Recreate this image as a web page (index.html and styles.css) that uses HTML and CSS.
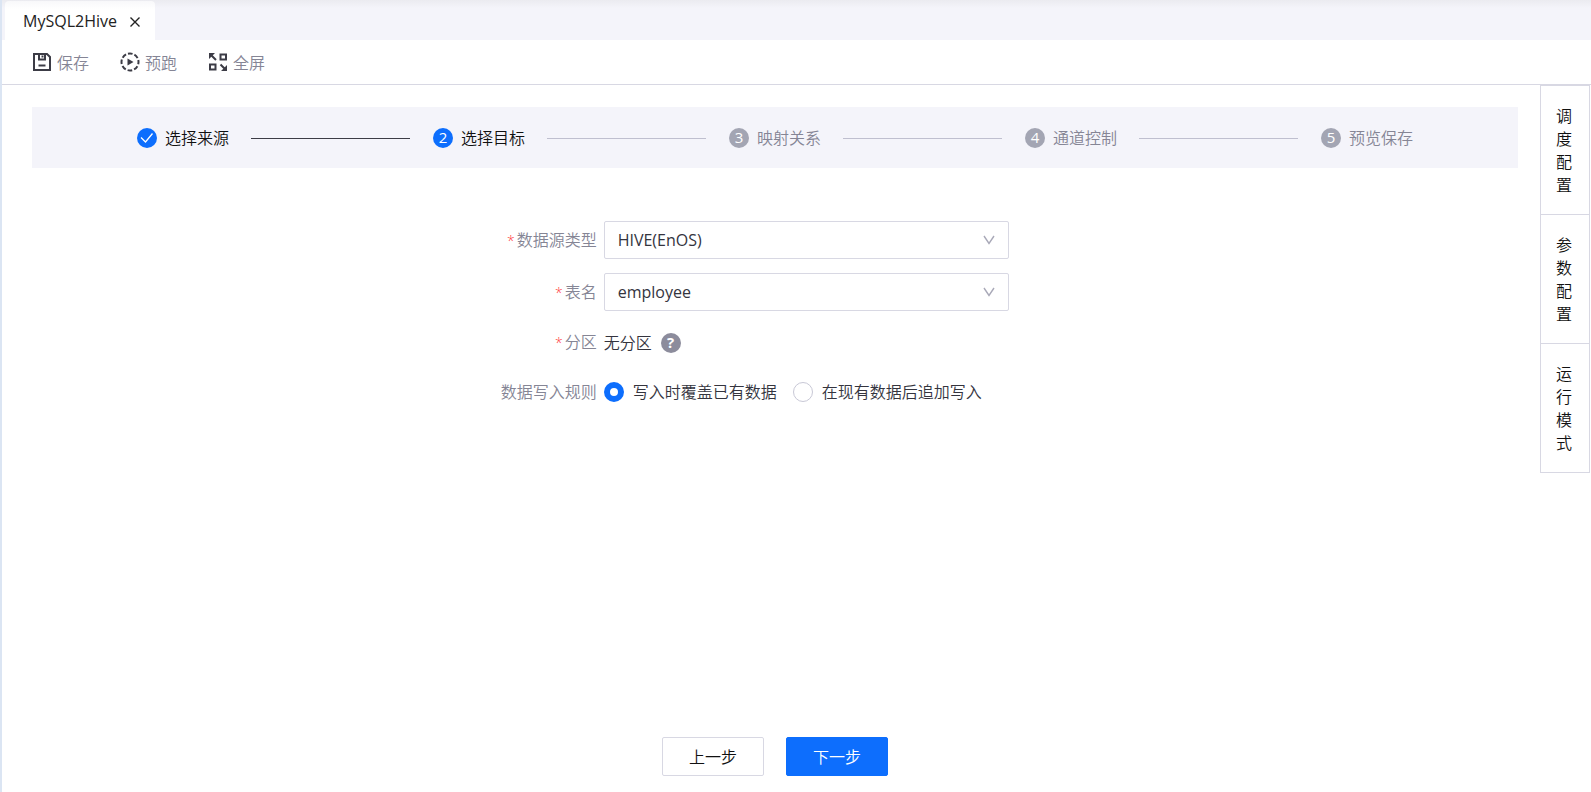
FILE: index.html
```html
<!DOCTYPE html>
<html lang="zh-CN">
<head>
<meta charset="utf-8">
<title>MySQL2Hive</title>
<link rel="stylesheet" href="styles.css">
</head>
<body>
<div class="app">
  <header class="tabbar">
    <div class="tab">
      <span>MySQL2Hive</span>
      <button class="tab-close" type="button" aria-label="关闭">
        <svg width="12" height="12" viewBox="0 0 12 12" fill="none" stroke="#222" stroke-width="1.4"><path d="M1.5 1.5l9 9M10.5 1.5l-9 9"/></svg>
      </button>
    </div>
  </header>

  <div class="toolbar">
    <button class="tool" type="button">
      <svg width="20" height="20" viewBox="0 0 20 20" fill="none" stroke="#3c3c46" stroke-width="2"><path d="M2 2h13l3 3v13H2z"/><path d="M7 2v5.500h6V2M10.500 3.500v2"/><path d="M6.500 13.500h7" /></svg>
      <span>保存</span>
    </button>
    <button class="tool" type="button">
      <svg width="20" height="20" viewBox="0 0 20 20" fill="none" stroke="#3c3c46" stroke-width="2"><circle cx="10" cy="10" r="8.500" stroke-dasharray="4.676 2" stroke-dashoffset="2.338"/><path d="M7.500 6.500v7l6-3.500z" fill="#3c3c46" stroke="none"/></svg>
      <span>预跑</span>
    </button>
    <button class="tool" type="button">
      <svg width="20" height="20" viewBox="0 0 20 20" fill="none" stroke="#3c3c46" stroke-width="2"><path d="M12.500 2.500h5.500v5h-5.500zM2 12.500h5.500v5H2z"/><path d="M3 3l5 5M12.500 12.500l5 5"/><path d="M1 1h6L1 7zM19 19h-6l6-6z" fill="#3c3c46" stroke="none"/></svg>
      <span>全屏</span>
    </button>
  </div>

  <div class="body">
    <main class="main">
      <ol class="steps">
        <li class="step done">
          <span class="dot"><svg width="20" height="20" viewBox="0 0 20 20" fill="none" stroke="#fff" stroke-width="1.300"><path d="M4 9.500l4.500 4.500L15.500 5.500"/></svg></span>
          <span class="step-name">选择来源</span>
        </li>
        <li class="step current"><span class="dot">2</span><span class="step-name">选择目标</span></li>
        <li class="step"><span class="dot">3</span><span class="step-name">映射关系</span></li>
        <li class="step"><span class="dot">4</span><span class="step-name">通道控制</span></li>
        <li class="step"><span class="dot">5</span><span class="step-name">预览保存</span></li>
      </ol>

      <form class="form">
        <div class="row">
          <label class="label required" for="source-type">数据源类型</label>
          <div class="select">
            <select id="source-type"><option>HIVE(EnOS)</option></select>
            <svg class="arrow" width="12" height="10" viewBox="0 0 12 10" fill="none" stroke="#a9a9b8" stroke-width="1.400"><path d="M1 1l5 7.500L11 1"/></svg>
          </div>
        </div>
        <div class="row">
          <label class="label required" for="table-name">表名</label>
          <div class="select">
            <select id="table-name"><option>employee</option></select>
            <svg class="arrow" width="12" height="10" viewBox="0 0 12 10" fill="none" stroke="#a9a9b8" stroke-width="1.400"><path d="M1 1l5 7.500L11 1"/></svg>
          </div>
        </div>
        <div class="row">
          <span class="label required">分区</span>
          <div class="value">
            <span>无分区</span>
            <button class="help" type="button" aria-label="帮助">?</button>
          </div>
        </div>
        <div class="row" role="radiogroup" aria-labelledby="write-rule">
          <span class="label" id="write-rule">数据写入规则</span>
          <div class="radios">
            <label class="radio"><input type="radio" name="rule" checked><span>写入时覆盖已有数据</span></label>
            <label class="radio"><input type="radio" name="rule"><span>在现有数据后追加写入</span></label>
          </div>
        </div>
      </form>

      <footer class="actions">
        <button class="btn" type="button">上一步</button>
        <button class="btn primary" type="button">下一步</button>
      </footer>
    </main>

    <aside class="side">
      <button class="side-item" type="button">调度配置</button>
      <button class="side-item" type="button">参数配置</button>
      <button class="side-item" type="button">运行模式</button>
    </aside>
  </div>
</div>
</body>
</html>
```
FILE: styles.css
```css
* {
  box-sizing: border-box;
}

body {
  margin: 0;
  background: #fff;
  color: #34343e;
  font: 350 16px/24px "Open Sans", "Noto Sans CJK SC", sans-serif;
}

button,
select,
input {
  margin: 0;
  padding: 0;
  border: 0;
  background: none;
  color: inherit;
  font: inherit;
}

button {
  cursor: pointer;
}

svg {
  display: block;
  flex: none;
}

.app {
  display: flex;
  flex-direction: column;
  min-height: 100vh;
  border-left: 2px solid #dbe5f3;
}

.tabbar {
  display: flex;
  height: 40px;
  padding: 1px 3px 0;
  background: linear-gradient(#ebebf0, #f4f4fa 8px);
}

.tab {
  display: flex;
  align-items: center;
  gap: 12px;
  padding: 0 14px 0 18px;
  border-radius: 4px 4px 0 0;
  background: linear-gradient(#f8f8fa, #fff 8px);
  color: #222;
  font-weight: 400;
}

.tab-close {
  padding-top: 2px;
}

.toolbar {
  display: flex;
  align-items: center;
  gap: 31px;
  height: 45px;
  padding: 0 30px;
  border-bottom: 1px solid #d8d8e3;
}

.tool {
  display: flex;
  align-items: center;
  gap: 5px;
  color: #858595;
}

.tool span {
  padding-top: 2px;
}

.body {
  display: flex;
  flex: 1;
}

.main {
  display: flex;
  flex: 1;
  flex-direction: column;
  min-width: 0;
  padding: 22px 22px 16px 30px;
}

.steps {
  display: flex;
  align-items: center;
  gap: 23px;
  height: 61px;
  margin: 0;
  padding: 0 105px;
  background: #f4f4fa;
  list-style: none;
}

.step {
  display: flex;
  flex: 1;
  align-items: center;
  gap: 8px;
  color: #858595;
  white-space: nowrap;
}

.step:last-child {
  flex: none;
}

.step:not(:last-child)::after {
  flex: 1;
  height: 1px;
  margin: 2px 0 0 14px;
  background: #bfbfcf;
  content: "";
}

.step.done,
.step.current {
  color: #111;
}

.step.done::after {
  background: #3c3c46;
}

.dot {
  width: 20px;
  height: 20px;
  border-radius: 50%;
  background: #a3a5b3;
  color: #fff;
  font-weight: 500;
  font-size: 15px;
  line-height: 19px;
  text-align: center;
}

.done .dot,
.current .dot {
  background: #0d6efd;
}

.form {
  display: flex;
  flex: 1;
  flex-direction: column;
  gap: 14px;
  padding-top: 53px;
}

.row {
  display: flex;
  align-items: center;
  gap: 7px;
  min-height: 35px;
}

.label {
  flex: none;
  width: 38%;
  color: #858595;
  text-align: right;
}

.required::before {
  margin-right: 2px;
  color: #ff3b3b;
  font-size: 14px;
  content: "*";
}

.select {
  position: relative;
  flex: 0 1 405px;
}

.select select {
  display: block;
  width: 100%;
  height: 38px;
  padding: 0 32px 0 13px;
  border: 1px solid #d8d8e3;
  border-radius: 2px;
  font-weight: 400;
  appearance: none;
}

.arrow {
  position: absolute;
  top: 14px;
  right: 14px;
  pointer-events: none;
}

.value {
  display: flex;
  align-items: center;
  gap: 9px;
}

.help {
  width: 20px;
  height: 20px;
  border-radius: 50%;
  background: #8c8c9c;
  color: #fff;
  font-weight: 700;
  font-size: 15px;
  line-height: 19px;
}

.radios {
  display: flex;
  flex-wrap: wrap;
  gap: 16px;
}

.radio {
  display: flex;
  align-items: center;
  gap: 9px;
}

.radio input {
  width: 20px;
  height: 20px;
  border: 1px solid #c8c8d6;
  border-radius: 50%;
  appearance: none;
}

.radio input:checked {
  border: 6px solid #0d6efd;
}

.actions {
  display: flex;
  justify-content: center;
  gap: 22px;
}

.btn {
  min-width: 102px;
  height: 39px;
  border: 1px solid #d8d8e3;
  border-radius: 2px;
  color: #111;
}

.btn.primary {
  border-color: #0d6efd;
  background: #0d6efd;
  color: #fff;
}

.side {
  display: flex;
  flex: none;
  flex-direction: column;
  align-items: stretch;
  width: 50px;
  margin-right: 1px;
}

.side-item {
  padding: 19px 17px 17px 15px;
  border: 1px solid #d8d8e3;
  border-top: 0;
  color: #111;
  line-height: 23px;
  word-break: break-all;
}

.side-item:first-child {
  border-top: 1px solid #d8d8e3;
}
```
